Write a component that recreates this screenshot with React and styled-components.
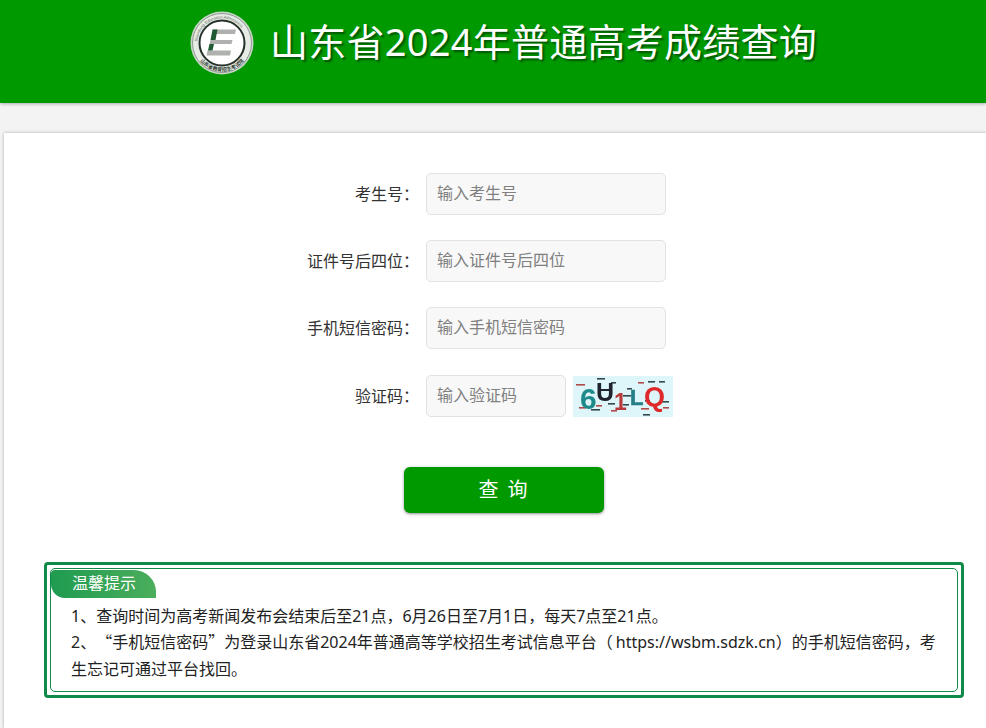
import React from "react";
import styled, {createGlobalStyle} from "styled-components";

const GlobalStyle = createGlobalStyle`
  html, body {
    margin: 0;
    padding: 0;
    background: #f3f3f3;
    font-family: "Noto Sans", "Noto Sans CJK SC", sans-serif;
    color: #333;
    text-spacing-trim: space-all;
  }
  * {
    box-sizing: border-box;
  }
`;

const Page = styled.div`
  width: 986px;
  height: 728px;
  overflow: hidden;
  display: flex;
  flex-direction: column;
`;

const Header = styled.header`
  flex: none;
  height: 103px;
  padding: 0 0 18px 190px;
  display: flex;
  align-items: center;
  gap: 17px;
  background: #009900;
  box-shadow: 0 1px 3px rgba(0, 0, 0, 0.3);
`;

const Title = styled.h1`
  margin: 0 0 3px -1px;
  font-size: 38px;
  font-weight: 400;
  line-height: 50px;
  letter-spacing: 0.25px;
  white-space: nowrap;
  color: #fff;
  text-shadow: 2px 2px 2px rgba(0, 0, 0, 0.45);
`;

const Main = styled.main`
  flex: 1;
  padding: 30px 0 0 4px;
`;

const Card = styled.section`
  height: 100%;
  padding: 40px 22px 0 40px;
  background: #fff;
  box-shadow: 0 0 3px rgba(0, 0, 0, 0.3);
`;

const Form = styled.form`
  display: flex;
  flex-direction: column;
  gap: 25px;
`;

const Row = styled.div`
  display: flex;
  align-items: center;
  height: 42px;
  &:last-child {
    margin-top: 1px;
  }
`;

const Label = styled.label`
  width: 382px;
  padding: 0 7px 3px 0;
  text-align: right;
  font-size: 16px;
  color: #333;
  white-space: nowrap;
`;

const Input = styled.input`
  width: ${(p) => p.$width || 240}px;
  height: 42px;
  padding: 0 10px 3px;
  border: 1px solid #e2e2e2;
  border-radius: 5px;
  outline: none;
  background: #f8f8f8;
  font-family: inherit;
  font-size: 16px;
  &::placeholder {
    color: #808080;
    opacity: 1;
  }
`;

const Captcha = styled.svg`
  flex: none;
  margin-left: 7px;
  display: block;
  filter: blur(0.3px);
`;

const SubmitRow = styled.div`
  margin-top: 50px;
  padding-left: 360px;
`;

const Submit = styled.button`
  display: block;
  width: 200px;
  height: 46px;
  padding: 0 0 3px;
  border: 0;
  border-radius: 6px;
  background: #009900;
  box-shadow: 0 1px 3px rgba(0, 0, 0, 0.45);
  color: #fff;
  font-family: inherit;
  font-size: 20px;
  letter-spacing: 2px;
`;

const Notice = styled.div`
  margin-top: 49px;
  height: 136px;
  padding: 3px;
  border: 3px solid #0f8a49;
  border-radius: 4px;
`;

const NoticeInner = styled.div`
  height: 100%;
  border: 1px solid #0f8a49;
  border-radius: 5px;
  padding: 1px 0 0 0;
`;

const Badge = styled.div`
  width: 105px;
  height: 28px;
  padding-left: 21px;
  border-radius: 4px 22px 0 14px;
  background: linear-gradient(90deg, #1f9b50, #4bae5c);
  color: #fff;
  font-size: 16px;
  line-height: 27px;
`;

const Tips = styled.div`
  margin-top: 4.5px;
  padding: 0 20px;
  font-size: 16px;
  line-height: 26.5px;
  color: #222;
`;

// the quotes are full width in the reference, Noto Sans would draw them narrow
const Quote = styled.span`
  font-family: "Noto Sans CJK SC", sans-serif;
  line-height: 0;
`;

const Url = styled.span`
  margin-left: 3px;
`;

function Logo() {
  return (
    <svg width="64" height="64" viewBox="0 0 64 64">
      <defs>
        <path id="ringTop" d="M7.5 32a24.5 24.5 0 0 1 49 0" />
        <path id="ringBottom" d="M4.7 40A28.5 28.5 0 0 0 59.3 40" />
      </defs>
      <circle cx="32" cy="32" r="31.5" fill="#c9d6c9" />
      <circle cx="32" cy="32" r="29.5" fill="#e6ebe6" stroke="#7d8a7d" strokeWidth="0.8" />
      <text fontSize="4" fill="#5f6b5f" fontFamily="Liberation Sans, sans-serif">
        <textPath href="#ringTop" startOffset="2%">Shandong Education Admissions</textPath>
      </text>
      <text fontSize="5" fontWeight="700" fill="#2e3a30" fontFamily="Noto Sans CJK SC, sans-serif">
        <textPath href="#ringBottom" startOffset="50%" textAnchor="middle">山东省教育招生考试院</textPath>
      </text>
      <circle cx="32" cy="32" r="22.5" fill="#fff" stroke="#26332a" strokeWidth="2" />
      <path d="M22.5 18.5H46l-1 4.500H24.500zM20.500 29h22l-1 4H19.500zM17.500 39.500H41l-1 5H16.500z" fill="#aeb1ae" />
      <path d="M22.500 18.500h5l-2 10.500h-5zM19.500 33h4.500l-1.500 6.500h-4.500z" fill="#1f5a33" />
    </svg>
  );
}

const captchaNoise = [
  [3, 8, 9], [24, 2, 8], [38, 6, 5], [65, 6, 6], [75, 5, 7], [86, 5, 6], [6, 31, 7], [18, 33, 9],
  [35, 27, 7], [38, 34, 6], [50, 19, 8], [50, 28, 6], [68, 32, 8], [72, 24, 5], [89, 25, 7],
  [90, 31, 6], [54, 12, 5], [70, 38, 7], [23, 29, 6],
];

function CaptchaImage() {
  return (
    <Captcha width="100" height="41" viewBox="0 0 100 41">
      <rect width="100" height="41" fill="#def6fa" />
      {captchaNoise.map(([x, y, w], i) => (
        <rect key={i} x={x} y={y} width={w} height="1.6" fill={i % 3 ? "#33484e" : "#b04a4a"} />
      ))}
      <g fontFamily="Liberation Sans, sans-serif" fontWeight="700">
        <text x="7" y="33" fontSize="30" fill="#1f8a8c">6</text>
        <text x="23" y="25" fontSize="25" fill="#20222c">U</text>
        <rect x="25" y="13" width="13" height="2" fill="#20222c" />
        <text x="41" y="34" fontSize="23" fill="#b93a3a">1</text>
        <text x="57" y="29" fontSize="22" fill="#247f86" stroke="#247f86" strokeWidth="0.6">L</text>
        <text x="71" y="30" fontSize="27" fill="#de2a2a">Q</text>
      </g>
    </Captcha>
  );
}

export default function App() {
  return (
    <Page>
      <GlobalStyle />
      <Header>
        <Logo />
        <Title>山东省2024年普通高考成绩查询</Title>
      </Header>
      <Main>
        <Card>
          <Form onSubmit={(e) => e.preventDefault()}>
            <Row>
              <Label>考生号：</Label>
              <Input placeholder="输入考生号" />
            </Row>
            <Row>
              <Label>证件号后四位：</Label>
              <Input placeholder="输入证件号后四位" />
            </Row>
            <Row>
              <Label>手机短信密码：</Label>
              <Input placeholder="输入手机短信密码" />
            </Row>
            <Row>
              <Label>验证码：</Label>
              <Input $width={140} placeholder="输入验证码" />
              <CaptchaImage />
            </Row>
          </Form>
          <SubmitRow>
            <Submit type="button">查 询</Submit>
          </SubmitRow>
          <Notice>
            <NoticeInner>
              <Badge>温馨提示</Badge>
              <Tips>
                <div>1、查询时间为高考新闻发布会结束后至21点，6月26日至7月1日，每天7点至21点。</div>
                <div>
                  2、<Quote>“</Quote>手机短信密码<Quote>”</Quote>为登录山东省2024年普通高等学校招生考试信息平台（<Url>https://wsbm.sdzk.cn</Url>）的手机短信密码，考
                  <br />
                  生忘记可通过平台找回。
                </div>
              </Tips>
            </NoticeInner>
          </Notice>
        </Card>
      </Main>
    </Page>
  );
}
